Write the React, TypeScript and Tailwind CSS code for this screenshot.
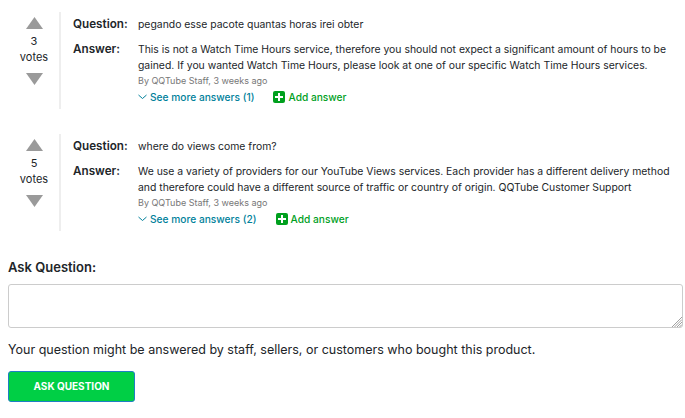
const font = "[font-family:Inter,'Liberation_Sans',sans-serif]";

type QA = {
  votes: number;
  question: string;
  answer: string[];
  more: number;
};

const items: QA[] = [
  {
    votes: 3,
    question: "pegando esse pacote quantas horas irei obter",
    answer: [
      "This is not a Watch Time Hours service, therefore you should not expect a significant amount of hours to be",
      "gained. If you wanted Watch Time Hours, please look at one of our specific Watch Time Hours services.",
    ],
    more: 1,
  },
  {
    votes: 5,
    question: "where do views come from?",
    answer: [
      "We use a variety of providers for our YouTube Views services. Each provider has a different delivery method",
      "and therefore could have a different source of traffic or country of origin. QQTube Customer Support",
    ],
    more: 2,
  },
];

function Row({ item }: { item: QA }) {
  return (
    <div className="flex h-[97px]">
      <div className="flex w-[53px] shrink-0 flex-col items-center border-r-2 border-[#eeeeee] pl-[1px] text-[11px] leading-[16px] text-[#212529]">
        <svg width="17" height="12" viewBox="0 0 17 12" className="mt-[5px]">
          <path d="M8.500 0L17 12H0z" fill="#9a9a9a" />
        </svg>
        <div className="mt-[4px]">{item.votes}</div>
        <div>votes</div>
        <svg width="17" height="12" viewBox="0 0 17 12" className="mt-[8px]">
          <path d="M0 0h17L8.500 12z" fill="#9a9a9a" />
        </svg>
      </div>
      <div className="pl-[12px] pt-[3px] text-[#212529]">
        <div className="flex h-[20px] items-center">
          <div className="w-[65px] text-[11.7px] font-semibold">Question:</div>
          <div className="text-[10.4px]">{item.question}</div>
        </div>
        <div className="mt-[7px] flex">
          <div className="w-[65px] text-[11.7px] font-semibold leading-[15px]">Answer:</div>
          <div>
            <div className="whitespace-nowrap text-[10.4px] leading-[15.5px]">
              {item.answer.map((l) => (
                <div key={l}>{l}</div>
              ))}
            </div>
            <div className="mt-[1px] text-[9px] leading-[14px] text-[#777777]">By QQTube Staff, 3 weeks ago</div>
            <div className="mt-[1px] flex items-center text-[10.2px] font-medium leading-[16px]">
              <svg width="9" height="6" viewBox="0 0 9 6" fill="none" stroke="#00819b" strokeWidth="1" className="mr-[3px]">
                <path d="M0.500 1l4 3.500L8.500 1" />
              </svg>
              <span className="text-[#00819b]">See more answers ({item.more})</span>
              <span className="ml-[19px] flex items-center text-[#00a01e]">
                <span className="mr-[3px] flex h-[12px] w-[12px] items-center justify-center rounded-[2px] bg-[#00a01e]">
                  <svg width="8" height="8" viewBox="0 0 8 8">
                    <path d="M3 0h2v3h3v2H5v3H3V5H0V3h3z" fill="#ffffff" />
                  </svg>
                </span>
                Add answer
              </span>
            </div>
          </div>
        </div>
      </div>
    </div>
  );
}

export default function App() {
  return (
    <div className={`${font} h-[418px] w-[685px] overflow-hidden bg-white px-[8px] pt-[12px]`}>
      <div className="flex flex-col gap-[25px]">
        {items.map((i) => (
          <Row key={i.votes} item={i} />
        ))}
      </div>
      <div className="mt-[26px] text-[13px] font-semibold leading-[20px] text-[#212529]">Ask Question:</div>
      <div className="relative mt-[7px] w-[675px]">
        <textarea className="block h-[44px] w-full resize-none rounded-[3px] border border-[#cccccc] bg-white" />
        <svg width="11" height="11" viewBox="0 0 11 11" stroke="#777777" strokeWidth="0.7" className="absolute bottom-[1px] right-[1px]">
          <path d="M11 1L1 11M11 3.500L3.500 11M11 6L6 11M11 8.500L8.500 11" />
        </svg>
      </div>
      <div className="mt-[12px] text-[12.5px] leading-[20px] text-[#212529]">
        Your question might be answered by staff, sellers, or customers who bought this product.
      </div>
      <button className="mt-[11px] block h-[31px] w-[127px] rounded-[3px] border border-[#1f7fc4] bg-[#00cf45] text-[10px] font-bold text-white">
        ASK QUESTION
      </button>
    </div>
  );
}
